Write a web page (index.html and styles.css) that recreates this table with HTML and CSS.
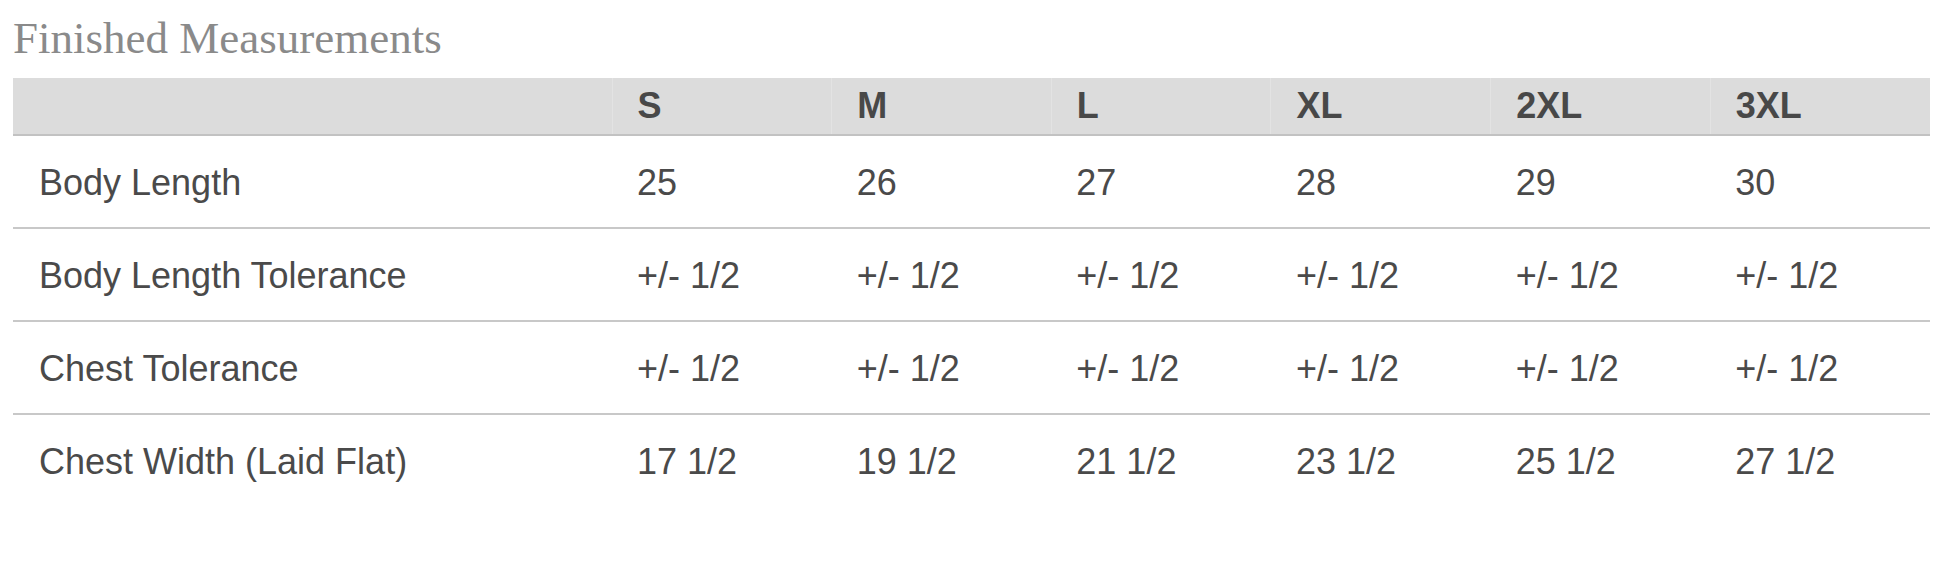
FILE: index.html
```html
<!DOCTYPE html>
<html lang="en">
<head>
<meta charset="utf-8">
<title>Finished Measurements</title>
<link rel="stylesheet" href="styles.css">
</head>
<body>
<div class="page">
  <h2 class="title">Finished Measurements</h2>
  <table class="size-table">
    <colgroup>
      <col class="col-label">
      <col class="col-size"><col class="col-size"><col class="col-size">
      <col class="col-size"><col class="col-size"><col class="col-size">
    </colgroup>
    <thead>
      <tr>
        <th></th><th>S</th><th>M</th><th>L</th><th>XL</th><th>2XL</th><th>3XL</th>
      </tr>
    </thead>
    <tbody>
      <tr><td>Body Length</td><td>25</td><td>26</td><td>27</td><td>28</td><td>29</td><td>30</td></tr>
      <tr><td>Body Length Tolerance</td><td>+/- 1/2</td><td>+/- 1/2</td><td>+/- 1/2</td><td>+/- 1/2</td><td>+/- 1/2</td><td>+/- 1/2</td></tr>
      <tr><td>Chest Tolerance</td><td>+/- 1/2</td><td>+/- 1/2</td><td>+/- 1/2</td><td>+/- 1/2</td><td>+/- 1/2</td><td>+/- 1/2</td></tr>
      <tr><td>Chest Width (Laid Flat)</td><td>17 1/2</td><td>19 1/2</td><td>21 1/2</td><td>23 1/2</td><td>25 1/2</td><td>27 1/2</td></tr>
    </tbody>
  </table>
</div>
</body>
</html>
```

FILE: styles.css
```css
html, body {
  margin: 0;
  padding: 0;
  background: #ffffff;
}

.page {
  padding: 0 16px 0 13px;
}

.title {
  margin: 0;
  padding-top: 13px;
  height: 78px;
  box-sizing: border-box;
  font-family: "Liberation Serif", "Times New Roman", serif;
  font-weight: normal;
  font-size: 45px;
  line-height: 50px;
  color: #8a8a8a;
}

.size-table {
  width: 1917px;
  border-collapse: collapse;
  table-layout: fixed;
  font-family: "Liberation Sans", Arial, Helvetica, sans-serif;
  font-size: 36px;
  color: #4a4a4a;
}

.col-label {
  width: 599px;
}

.size-table thead th {
  background: #dcdcdc;
  height: 56px;
  padding: 0 0 0 25px;
  text-align: left;
  font-weight: bold;
  color: #484848;
  border-bottom: 2px solid #c2c2c2;
  border-left: 1px solid #e3e3e3;
  vertical-align: middle;
  line-height: 40px;
}

.size-table thead th:first-child {
  border-left: none;
}

.size-table tbody td {
  height: 88px;
  padding: 3px 0 0 25px;
  vertical-align: middle;
  border-bottom: 2px solid #c8c8c8;
  line-height: 40px;
  white-space: nowrap;
}

.size-table tbody td:first-child {
  padding-left: 26px;
}

.size-table tbody tr:last-child td {
  border-bottom: none;
}
```
